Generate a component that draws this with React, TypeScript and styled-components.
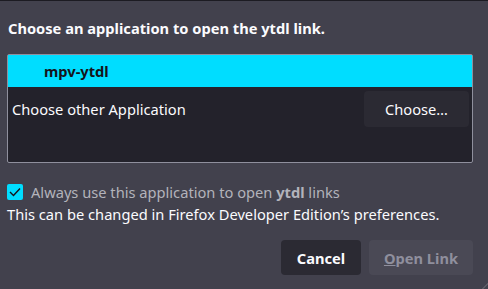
import React from "react";
import styled, { createGlobalStyle } from "styled-components";

const GlobalStyle = createGlobalStyle`
  html, body {
    margin: 0;
    padding: 0;
    background: #42414d;
  }
  body {
    font-family: "Noto Sans", "Open Sans", sans-serif;
    font-size: 14.67px;
    color: #fbfbfe;
  }
`;

export default function App() {
  return (
    <>
      <GlobalStyle />
      <Dialog>
        <Title>Choose an application to open the ytdl link.</Title>
        <List>
          <Item selected>
            <AppIcon />
            <AppName>mpv-ytdl</AppName>
          </Item>
          <Item>
            <span>Choose other Application</span>
            <ChooseButton>Choose…</ChooseButton>
          </Item>
        </List>
        <Remember>
          <Check>
            <svg width="12" height="10" viewBox="0 0 12 10">
              <path d="M1 5 L4.5 8.5 L11 1.5" fill="none" stroke="#15141a" strokeWidth="1.4" />
            </svg>
          </Check>
          <RememberLabel>
            Always use this application to open <b>ytdl</b> links
          </RememberLabel>
        </Remember>
        <Note>This can be changed in Firefox Developer Edition’s preferences.</Note>
        <Footer>
          <Button>Cancel</Button>
          <Button disabled>
            <u>O</u>pen Link
          </Button>
        </Footer>
        <Grip />
      </Dialog>
    </>
  );
}

const Dialog = styled.div`
  position: relative;
  width: 488px;
  height: 289px;
  box-sizing: border-box;
  border-top: 1px solid #1c1b22;
  padding: 0 15px 0 7px;
  display: flex;
  flex-direction: column;
  overflow: hidden;
`;

const Title = styled.h1`
  margin: 17px 0 0 1px;
  font-size: 14.67px;
  font-weight: 700;
  line-height: 20px;
`;

const List = styled.div`
  margin-top: 16px;
  height: 109px;
  flex: none;
  box-sizing: border-box;
  border: 1px solid #8f8f9d;
  border-radius: 2px;
  background: #23222b;
  display: flex;
  flex-direction: column;
`;

const Item = styled.div<{ selected?: boolean }>`
  display: flex;
  align-items: center;
  justify-content: ${(p) => (p.selected ? "flex-start" : "space-between")};
  padding: ${(p) => (p.selected ? "0" : "3px 3px 0 4px")};
  height: ${(p) => (p.selected ? "32px" : "38px")};
  background: ${(p) => (p.selected ? "#00ddff" : "transparent")};
  color: ${(p) => (p.selected ? "#15141a" : "#fbfbfe")};
`;

const AppIcon = styled.span`
  width: 36px;
  flex: none;
`;

const AppName = styled.span`
  font-weight: 700;
`;

const ChooseButton = styled.button`
  font: inherit;
  color: #fbfbfe;
  background: #2b2a33;
  border: none;
  border-radius: 4px;
  width: 105px;
  height: 36px;
`;

const Remember = styled.label`
  margin-top: 19px;
  display: flex;
  align-items: center;
  gap: 8px;
  line-height: 20px;
`;

const Check = styled.span`
  width: 16px;
  height: 16px;
  border-radius: 2px;
  background: #00ddff;
  display: flex;
  align-items: center;
  justify-content: center;
`;

const RememberLabel = styled.span`
  color: #b3b3bb;
  b {
    font-weight: 700;
  }
`;

const Note = styled.p`
  margin: 2px 0 0 0;
  line-height: 20px;
`;

const Footer = styled.div`
  margin-top: 16px;
  display: flex;
  justify-content: flex-end;
  gap: 8px;
`;

const Button = styled.button`
  font: inherit;
  font-weight: 700;
  height: 35px;
  padding: 0 14px;
  min-width: 80px;
  border: none;
  border-radius: 4px;
  background: #2b2a33;
  color: #fbfbfe;
  &:disabled {
    background: #4a4955;
    color: #8f8f9d;
    min-width: 104px;
  }
  u {
    text-decoration-thickness: 1px;
  }
`;

const Grip = styled.span`
  position: absolute;
  right: 0;
  bottom: 0;
  width: 8px;
  height: 8px;
  background: linear-gradient(135deg, transparent 60%, #5b5b66 60%, #5b5b66 70%, transparent 70%);
`;
